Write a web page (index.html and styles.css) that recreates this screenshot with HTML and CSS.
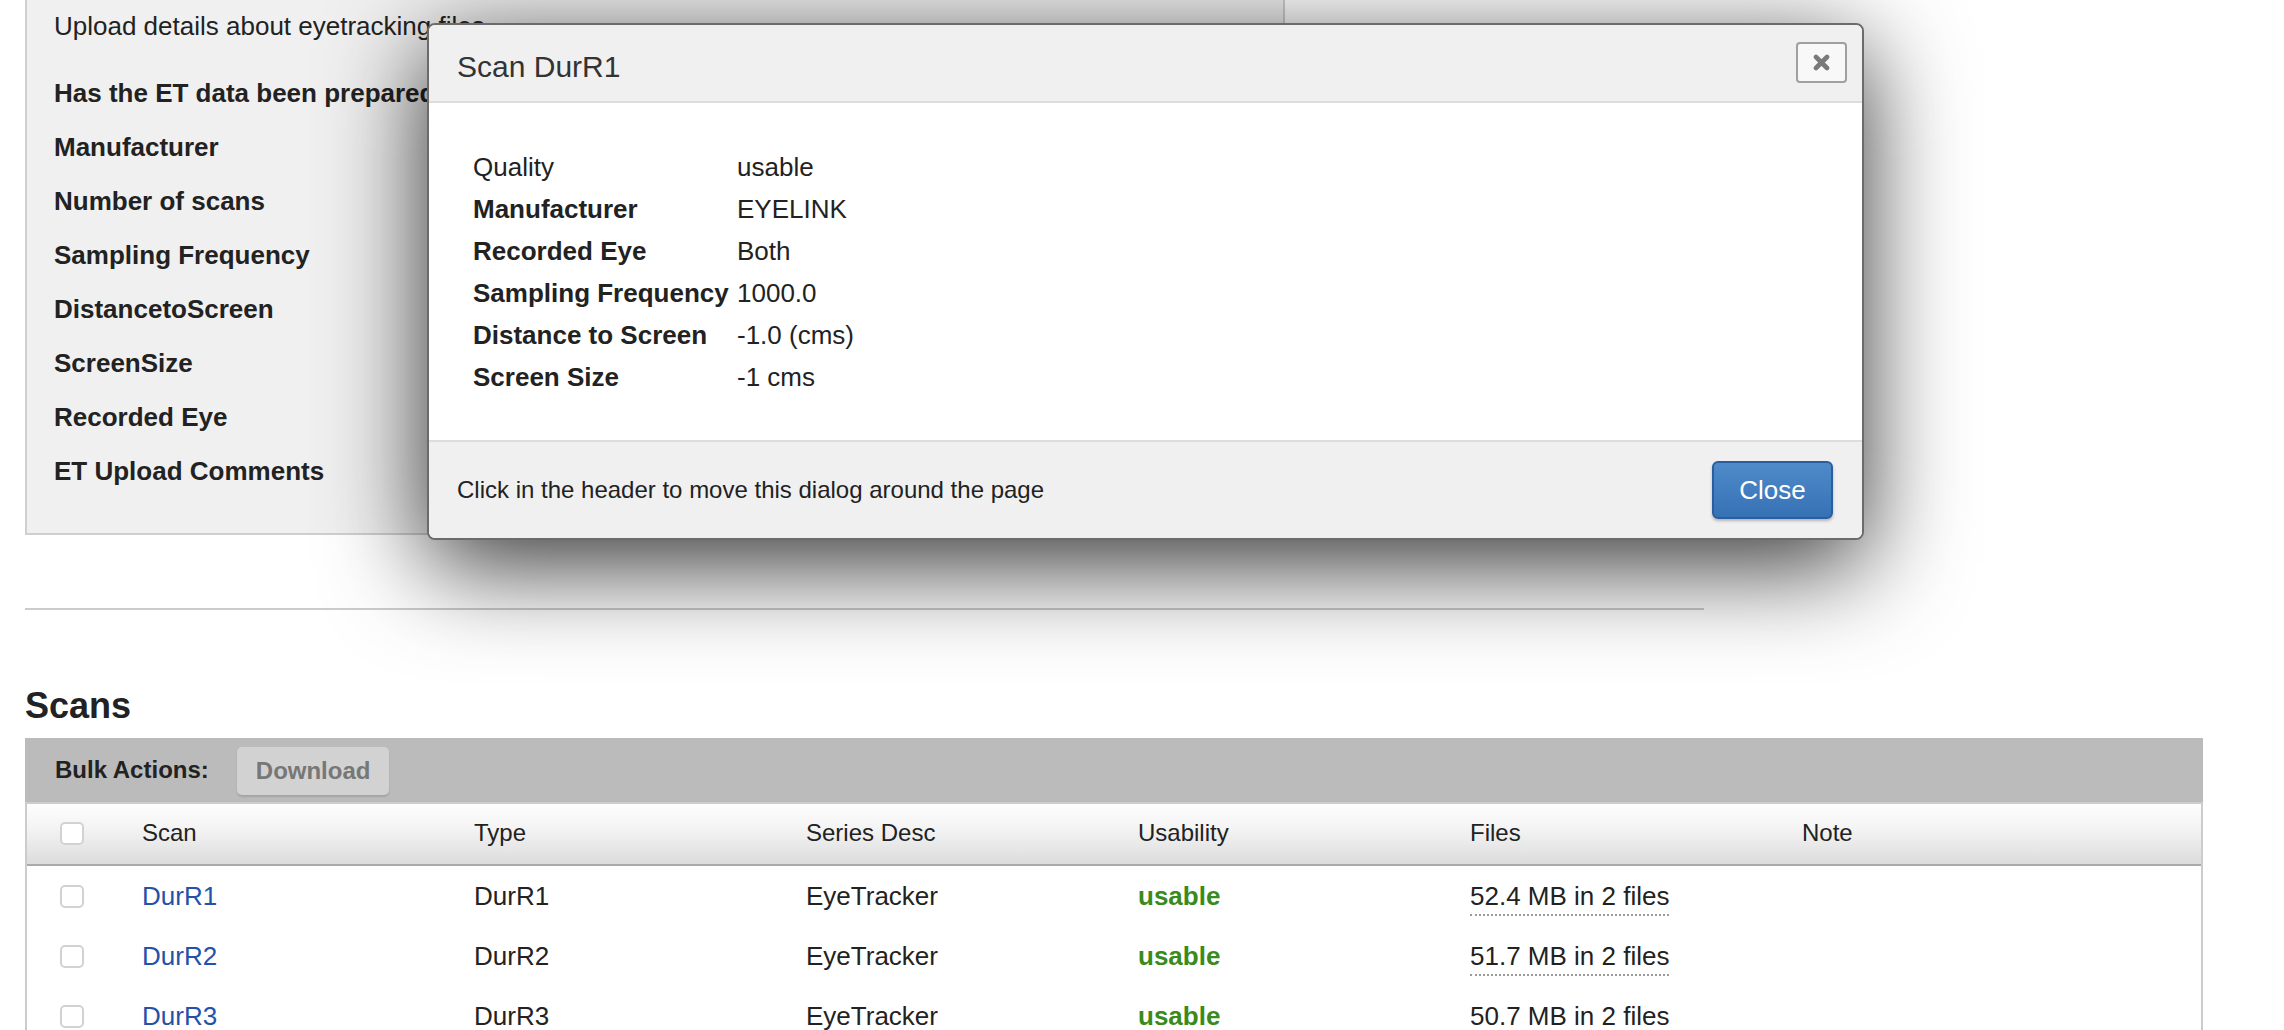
FILE: index.html
```html
<!DOCTYPE html>
<html lang="en">
<head>
<meta charset="utf-8">
<title>Scan DurR1</title>
<link rel="stylesheet" href="styles.css">
</head>
<body>
<div class="page">
  <section class="et-panel">
    <p class="et-intro">Upload details about eyetracking files</p>
    <div class="et-fields">
      <div class="et-label">Has the ET data been prepared?</div>
      <div class="et-label">Manufacturer</div>
      <div class="et-label">Number of scans</div>
      <div class="et-label">Sampling Frequency</div>
      <div class="et-label">DistancetoScreen</div>
      <div class="et-label">ScreenSize</div>
      <div class="et-label">Recorded Eye</div>
      <div class="et-label">ET Upload Comments</div>
    </div>
  </section>

  <hr class="divider">

  <h2 class="scans-title">Scans</h2>
  <div class="scans">
    <div class="bulk-bar">
      <span class="bulk-label">Bulk Actions:</span>
      <button class="btn-download" type="button">Download</button>
    </div>
    <div class="scan-table">
      <div class="scan-row scan-head">
        <div class="cell cell-check"><span class="checkbox"></span></div>
        <div class="cell">Scan</div>
        <div class="cell">Type</div>
        <div class="cell">Series Desc</div>
        <div class="cell">Usability</div>
        <div class="cell">Files</div>
        <div class="cell">Note</div>
      </div>
      <div class="scan-row">
        <div class="cell cell-check"><span class="checkbox"></span></div>
        <div class="cell"><a class="scan-link" href="#">DurR1</a></div>
        <div class="cell">DurR1</div>
        <div class="cell">EyeTracker</div>
        <div class="cell usable">usable</div>
        <div class="cell"><span class="files">52.4 MB in 2 files</span></div>
        <div class="cell"></div>
      </div>
      <div class="scan-row">
        <div class="cell cell-check"><span class="checkbox"></span></div>
        <div class="cell"><a class="scan-link" href="#">DurR2</a></div>
        <div class="cell">DurR2</div>
        <div class="cell">EyeTracker</div>
        <div class="cell usable">usable</div>
        <div class="cell"><span class="files">51.7 MB in 2 files</span></div>
        <div class="cell"></div>
      </div>
      <div class="scan-row">
        <div class="cell cell-check"><span class="checkbox"></span></div>
        <div class="cell"><a class="scan-link" href="#">DurR3</a></div>
        <div class="cell">DurR3</div>
        <div class="cell">EyeTracker</div>
        <div class="cell usable">usable</div>
        <div class="cell"><span class="files">50.7 MB in 2 files</span></div>
        <div class="cell"></div>
      </div>
    </div>
  </div>
</div>

<div class="dialog">
  <div class="dialog-header">
    <span class="dialog-title">Scan DurR1</span>
    <button class="dialog-x" type="button" aria-label="close">
      <svg width="17" height="17" viewBox="0 0 17 17"><path d="M3 3 L14 14 M14 3 L3 14" stroke="#7a7a7a" stroke-width="4.6" stroke-linecap="round"/></svg>
    </button>
  </div>
  <div class="dialog-body">
    <div class="info-grid">
      <div class="info-label plain">Quality</div><div class="info-value">usable</div>
      <div class="info-label">Manufacturer</div><div class="info-value">EYELINK</div>
      <div class="info-label">Recorded Eye</div><div class="info-value">Both</div>
      <div class="info-label">Sampling Frequency</div><div class="info-value">1000.0</div>
      <div class="info-label">Distance to Screen</div><div class="info-value">-1.0 (cms)</div>
      <div class="info-label">Screen Size</div><div class="info-value">-1 cms</div>
    </div>
  </div>
  <div class="dialog-footer">
    <span class="dialog-hint">Click in the header to move this dialog around the page</span>
    <button class="btn-close" type="button">Close</button>
  </div>
</div>
</body>
</html>
```

FILE: styles.css
```css
html, body {
  margin: 0;
  padding: 0;
  background: #ffffff;
  overflow: hidden;
}

body {
  font-family: "Liberation Sans", Arial, Helvetica, sans-serif;
  font-size: 26px;
  color: #222222;
}

.page {
  padding-left: 25px;
  width: 2178px;
}

/* ---- ET upload panel ---- */
.et-panel {
  margin-top: -20px;
  width: 1229px;
  background: #f0f0f0;
  border: 2px solid #cfcfcf;
  padding: 24px 0 35px 27px;
  overflow: hidden;
}

.et-intro {
  margin: 0 0 20px;
  line-height: 40px;
  white-space: nowrap;
}

.et-fields {
  display: flex;
  flex-direction: column;
}

.et-label {
  height: 54px;
  line-height: 54px;
  font-weight: bold;
  white-space: nowrap;
}

.divider {
  border: 0;
  height: 2px;
  background: #cccccc;
  width: 1679px;
  margin: 73px 0 0;
}

/* ---- Scans ---- */
.scans-title {
  margin: 74px 0 10px;
  font-size: 36px;
  line-height: 44px;
  font-weight: bold;
  color: #222;
}

.scans {
  width: 2178px;
}

.bulk-bar {
  height: 64px;
  background: #bbbbbb;
  display: flex;
  align-items: center;
  padding-left: 30px;
  gap: 28px;
}

.bulk-label {
  font-size: 24px;
  font-weight: bold;
  color: #222;
}

.btn-download {
  font-family: inherit;
  font-size: 24px;
  font-weight: bold;
  color: #777777;
  background: #d2d2d2;
  border: 0;
  border-radius: 5px;
  height: 48px;
  padding: 0 19px;
  box-shadow: 0 2px 2px rgba(0, 0, 0, 0.12);
  margin-top: 2px;
}

.scan-table {
  border-left: 2px solid #cccccc;
  border-right: 2px solid #cccccc;
}

.scan-row {
  display: grid;
  grid-template-columns: 115px repeat(5, 332px) 1fr;
  height: 60px;
  align-items: center;
}

.scan-head {
  border-top: 2px solid #cccccc;
  border-bottom: 2px solid #aaaaaa;
  background: linear-gradient(#fdfdfd, #f4f4f4 40%, #dcdcdc);
  height: 60px;
  font-size: 24px;
  padding-bottom: 2px;
  box-sizing: border-box;
  height: 64px;
}

.cell {
  white-space: nowrap;
  line-height: 30px;
}

.cell-check {
  padding-left: 33px;
  display: flex;
  align-items: center;
}

.checkbox {
  display: block;
  width: 20px;
  height: 19px;
  border: 2px solid #d2d2d2;
  border-radius: 5px;
  background: #ffffff;
}

.scan-link {
  color: #2352a8;
  text-decoration: none;
}

.usable {
  color: #3a8a1c;
  font-weight: bold;
}

.files {
  border-bottom: 2px dotted #9a9a9a;
  padding-bottom: 3px;
}

/* ---- Dialog ---- */
.dialog {
  position: absolute;
  left: 427px;
  top: 23px;
  width: 1433px;
  border: 2px solid #6b6b6b;
  border-radius: 8px;
  background: #ffffff;
  overflow: hidden;
  box-shadow: 0 25px 100px rgba(0, 0, 0, 0.8);
}

.dialog-header {
  height: 76px;
  background: #f0f0f0;
  border-bottom: 2px solid #dddddd;
  display: flex;
  align-items: center;
  justify-content: space-between;
  padding: 0 15px 0 28px;
}

.dialog-title {
  font-size: 30px;
  color: #333;
  padding-top: 8px;
}

.dialog-x {
  width: 51px;
  height: 41px;
  border: 2px solid #a0a0a0;
  border-radius: 4px;
  background: #f8f8f8;
  display: flex;
  align-items: center;
  justify-content: center;
  padding: 0;
  margin-top: -2px;
}

.dialog-body {
  padding: 43px 44px 42px;
  background: #ffffff;
}

.info-grid {
  display: grid;
  grid-template-columns: 264px 1fr;
  grid-auto-rows: 42px;
  align-items: center;
}

.info-label {
  font-weight: bold;
  white-space: nowrap;
}

.info-label.plain {
  font-weight: normal;
}

.dialog-footer {
  height: 96px;
  background: #f0f0f0;
  border-top: 2px solid #dddddd;
  display: flex;
  align-items: center;
  justify-content: space-between;
  padding: 0 29px 0 28px;
}

.dialog-hint {
  color: #222;
  font-size: 24px;
}

.btn-close {
  font-family: inherit;
  font-size: 26px;
  color: #ffffff;
  width: 121px;
  height: 58px;
  border: 2px solid #2b5e9e;
  border-radius: 6px;
  background: linear-gradient(#4f8bca, #3671b5);
  box-shadow: 0 2px 3px rgba(0, 0, 0, 0.25);
  padding: 0;
}
```
